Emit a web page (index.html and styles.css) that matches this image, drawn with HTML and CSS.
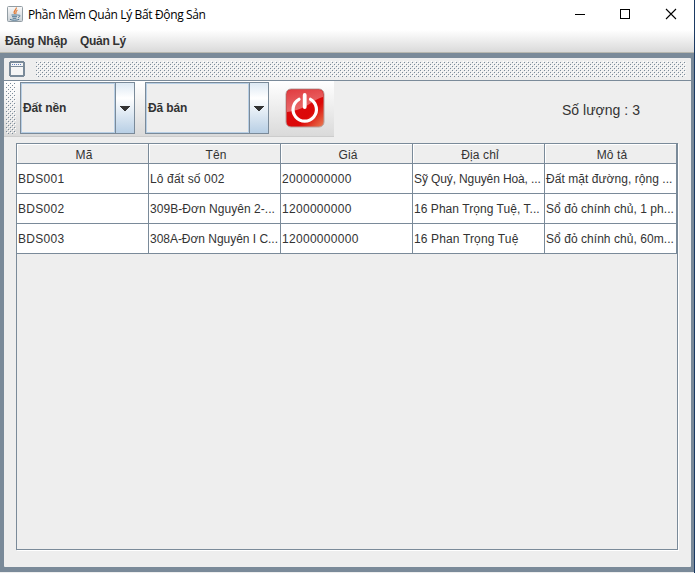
FILE: index.html
```html
<!DOCTYPE html>
<html lang="vi">
<head>
<meta charset="utf-8">
<title>Phần Mềm Quản Lý Bất Động Sản</title>
<link rel="stylesheet" href="styles.css">
</head>
<body>
<div class="window">
  <header class="titlebar">
    <svg class="java" width="16" height="16" viewBox="0 0 16 16">
      <defs><linearGradient id="tile" x2="0" y2="1"><stop stop-color="#fafafa"/><stop offset="1" stop-color="#c9d0d5"/></linearGradient></defs>
      <rect x=".5" y=".5" width="15" height="15" rx="1" fill="url(#tile)" stroke="#929da4"/>
      <path d="M9.300 1.500C10 4 5.500 4.500 7.500 8M10.500 4.200C8 5 9.500 6 8.600 8" fill="none" stroke="#e17a35" stroke-width="1.200"/>
      <path d="M4.500 9h6.300M5 10.700h5M5.700 12.300h3.600M11 9.300c3-.8 2.200 1.800 0 2.200M3 13.300c2 1.300 7 1.200 9.200 0" fill="none" stroke="#4f7895"/>
    </svg>
    <span class="caption">Phần Mềm Quản Lý Bất Động Sản</span>
    <svg class="controls" width="110" height="16" viewBox="0 0 110 16" fill="none" stroke="#000" shape-rendering="crispEdges">
      <path d="M0 6.500h10M45.500 1.500h9v9h-9z"/>
      <path d="M91 1l10 10M101 1L91 11" shape-rendering="auto" stroke-width="1.100"/>
    </svg>
  </header>
  <nav class="menubar"><span class="login">Đăng Nhập</span><span class="manage">Quản Lý</span></nav>
  <main class="desktop">
    <section class="frame">
      <div class="framebar">
        <svg width="16" height="16" viewBox="0 0 16 16" shape-rendering="crispEdges">
          <path d="M1 0h14v1h1v14h-1v1H1v-1H0V1h1z" fill="#7a8a99"/>
          <path d="M2 2h12v3H2zM2 6h12v8H2z" fill="#f5f5f5"/>
          <path d="M3 3.500h10" stroke="#6382bf" stroke-dasharray="1 1"/>
        </svg>
        <svg class="grip" width="650" height="16">
          <defs><pattern id="dots" width="4" height="4" patternUnits="userSpaceOnUse"><path d="M0 1h1v1H0zM2 3h1v1H2z" fill="#7a8a99"/><path d="M1 2h1v1H1zM3 0h1v1H3z" fill="#fff"/></pattern></defs>
          <rect width="650" height="16" fill="url(#dots)" shape-rendering="crispEdges"/>
        </svg>
      </div>
      <div class="top">
        <div class="toolbar">
          <svg class="handle" width="10" height="52"><rect width="10" height="52" fill="url(#dots)" shape-rendering="crispEdges"/></svg>
          <div class="combo type"><span class="value">Đất nền</span><span class="drop"><svg width="10" height="5" shape-rendering="crispEdges"><path d="M0 0h10v1H9v1H8v1H7v1H6v1H4V4H3V3H2V2H1V1H0z" fill="#333"/></svg></span></div>
          <div class="combo state"><span class="value">Đã bán</span><span class="drop"><svg width="10" height="5" shape-rendering="crispEdges"><path d="M0 0h10v1H9v1H8v1H7v1H6v1H4V4H3V3H2V2H1V1H0z" fill="#333"/></svg></span></div>
          <svg class="power" width="40" height="40" viewBox="0 0 40 40">
            <defs>
              <linearGradient id="red" x2="1" y2="1"><stop stop-color="#d90c12"/><stop offset=".65" stop-color="#dc0808"/><stop offset="1" stop-color="#e98256"/></linearGradient>
              <linearGradient id="shine" x2=".4" y2="1"><stop stop-color="#fff" stop-opacity=".2"/><stop offset="1" stop-color="#fff" stop-opacity=".42"/></linearGradient>
            </defs>
            <rect x="1" y="1" width="38" height="38" rx="5" fill="url(#red)" stroke="#b7a3a0"/>
            <path d="M2 6q0-4 4-4h28q4 0 4 4v3C28 11 22 22 2 24z" fill="url(#shine)"/>
            <path d="M14 11.300A11.700 11.700 0 1 0 25.500 11.300" fill="none" stroke="#fff" stroke-width="3.200" stroke-linecap="round"/>
            <path d="M19.700 7v12" stroke="#fff" stroke-width="3.800" stroke-linecap="round"/>
          </svg>
        </div>
        <div class="count">Số lượng : 3</div>
      </div>
      <div class="scroll">
        <table>
          <thead><tr><th>Mã</th><th>Tên</th><th>Giá</th><th>Địa chỉ</th><th>Mô tả</th></tr></thead>
          <tbody>
            <tr><td class="wide">BDS001</td><td>Lô đất số 002</td><td class="wide">2000000000</td><td class="snug">Sỹ Quý, Nguyên Hoà, ...</td><td class="even">Đất mặt đường, rộng ...</td></tr>
            <tr><td class="wide">BDS002</td><td class="even">309B-Đơn Nguyên 2-...</td><td class="wide">1200000000</td><td class="even">16 Phan Trọng Tuệ, T...</td><td class="even">Sổ đỏ chính chủ, 1 ph...</td></tr>
            <tr><td class="wide">BDS003</td><td class="tight">308A-Đơn Nguyên I C...</td><td class="wide">12000000000</td><td>16 Phan Trọng Tuệ</td><td class="even">Sổ đỏ chính chủ, 60m...</td></tr>
          </tbody>
        </table>
      </div>
    </section>
  </main>
</div>
</body>
</html>
```
FILE: styles.css
```css
* { box-sizing: border-box; }
body { margin: 0; overflow: hidden; font: 12px "Liberation Sans", Arial, sans-serif; color: #333; }
svg { display: block; flex: none; }
.window { width: 695px; height: 573px; display: flex; flex-direction: column; border-right: 1px solid #1b3a63; background: #fff; }
.titlebar { height: 30px; display: flex; padding: 6px 0 0 7px; color: #000; }
.caption { margin-left: 5px; width: 547px; font: 12px/17px "Open Sans", sans-serif; letter-spacing: -.36px; white-space: nowrap; }
.controls { margin-top: 2px; }
.menubar { height: 23px; display: flex; padding-left: 5px; font-weight: bold; line-height: 22px; background: linear-gradient(#fff, #dadada); border-bottom: 1px solid #b8b8b0; }
.login { width: 75px; letter-spacing: -.12px; }
.manage { letter-spacing: -.3px; }
.desktop { flex: 1; padding: 5px 3px 0 4px; background: #7a8a99; border-bottom: 1px solid #eee; }
.frame { height: 509px; background: #eee; border-radius: 1px; overflow: hidden; }
.framebar { height: 23px; display: flex; padding: 3px 0 0 5px; border-bottom: 1px solid #7a8a99; }
.grip { margin-left: 11px; }
.top { height: 56px; display: flex; }
.toolbar { width: 330px; height: 56px; display: flex; padding: 1px 0 0 2px; background: linear-gradient(#fff, #dadada); border-bottom: 1px solid #ccc; }
.handle { margin-right: 4px; }
.combo { height: 52px; display: flex; border: 1px solid #7a8a99; font-weight: bold; }
.type { width: 115px; margin-right: 10px; }
.state { width: 124px; margin-right: 16px; }
.value { flex: 1; padding-left: 1px; border: 1px solid #b8cfe5; background: #eee; line-height: 48px; letter-spacing: -.12px; }
.drop { width: 19px; display: flex; align-items: center; justify-content: center; border-left: 1px solid #7a8a99; background: linear-gradient(#dce8f3, #fff 30%, #b8cfe5); }
.power { margin-top: 6px; }
.count { margin: 19px 0 0 228px; font-size: 14px; line-height: 20px; letter-spacing: .02px; }
.scroll { width: 662px; height: 407px; margin: 6px 0 0 12px; border: 1px solid #7a8a99; box-shadow: 1px 1px #fff; }
table { width: 660px; table-layout: fixed; border-collapse: separate; border-spacing: 0; }
th, td { border-right: 1px solid #7a8a99; border-bottom: 1px solid #7a8a99; white-space: nowrap; overflow: hidden; }
th { height: 20px; padding: 2px 0 0 3px; font-weight: normal; line-height: 16px; background: #eee; box-shadow: inset 1px 1px #fff; letter-spacing: .1px; }
td { height: 30px; padding: 0 0 0 1px; line-height: 28px; background: #fff; letter-spacing: .14px; }
.wide { letter-spacing: .3px; }
.even { letter-spacing: .05px; }
.snug { letter-spacing: -.12px; }
.tight { letter-spacing: -.03px; }
```
